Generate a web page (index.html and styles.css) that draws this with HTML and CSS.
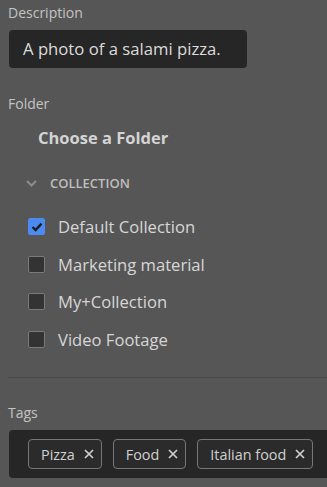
FILE: index.html
```html
<!DOCTYPE html>
<html>
<head>
<meta charset="utf-8">
<link rel="stylesheet" href="styles.css">
</head>
<body>
<div class="panel">
  <div class="field">
    <div class="label">Description</div>
    <div class="input">A photo of a salami pizza.</div>
  </div>
  <div class="field folder">
    <div class="label">Folder</div>
    <div class="choose">Choose a Folder</div>
    <div class="group-head">
      <svg class="chev" width="11" height="7" viewBox="0 0 11 7"><path d="M1 1 L5.5 5.5 L10 1" fill="none" stroke="#8c8c8c" stroke-width="2"/></svg>
      <span>COLLECTION</span>
    </div>
    <ul class="list">
      <li class="item"><span class="cb checked"><svg width="12" height="10" viewBox="0 0 12 10"><path d="M1.5 5 L4.6 8 L10.5 1.6" fill="none" stroke="#1c1c1c" stroke-width="2.4"/></svg></span>Default Collection</li>
      <li class="item"><span class="cb"></span>Marketing material</li>
      <li class="item"><span class="cb"></span>My+Collection</li>
      <li class="item"><span class="cb"></span>Video Footage</li>
    </ul>
  </div>
  <div class="divider"></div>
  <div class="field tags-field">
    <div class="label">Tags</div>
    <div class="tags">
      <span class="tag">Pizza<svg class="x" width="10" height="10" viewBox="0 0 10 10"><path d="M1 1 L9 9 M9 1 L1 9" stroke="#cfcfcf" stroke-width="1.7"/></svg></span>
      <span class="tag">Food<svg class="x" width="10" height="10" viewBox="0 0 10 10"><path d="M1 1 L9 9 M9 1 L1 9" stroke="#cfcfcf" stroke-width="1.7"/></svg></span>
      <span class="tag">Italian food<svg class="x" width="10" height="10" viewBox="0 0 10 10"><path d="M1 1 L9 9 M9 1 L1 9" stroke="#cfcfcf" stroke-width="1.7"/></svg></span>
    </div>
  </div>
</div>
</body>
</html>
```
FILE: styles.css
```css
* { box-sizing: border-box; }
html, body { margin: 0; padding: 0; }
body {
  background: #565656;
  font-family: "Open Sans", "Noto Sans", sans-serif;
  color: #d2d2d2;
  width: 327px;
  height: 487px;
  overflow: hidden;
}
.panel { padding: 4px 0 0 8px; }
.label {
  font-size: 14px;
  color: #c4c4c4;
  line-height: 18px;
}
.input {
  margin-top: 8px;
  margin-left: 1px;
  width: 238px;
  height: 38px;
  background: #262626;
  border-radius: 4px;
  padding: 0 14px;
  font-size: 16.7px;
  line-height: 38px;
  color: #dcdcdc;
}
.folder { margin-top: 27px; }
.choose {
  margin: 14px 0 0 30px;
  font-size: 16.5px;
  font-weight: 700;
  color: #d4d4d4;
  line-height: 22px;
}
.group-head {
  display: flex;
  align-items: center;
  margin: 24px 0 0 18px;
  height: 20px;
  font-size: 13px;
  font-weight: 600;
  color: #bfbfbf;
}
.chev { margin-right: 13px; }
.list { list-style: none; margin: 15px 0 0 0; padding: 0; }
.item {
  display: flex;
  align-items: center;
  height: 37.6px;
  padding-left: 20px;
  font-size: 16.6px;
  color: #d6d6d6;
}
.cb {
  width: 17px;
  height: 17px;
  border: 1.5px solid #7a7a7a;
  border-radius: 2px;
  background: #333;
  margin-right: 13px;
  display: flex;
  align-items: center;
  justify-content: center;
}
.cb.checked { background: #4b8af0; border-color: #4b8af0; }
.divider {
  height: 1px;
  background: #484848;
  margin-top: 19px;
}
.tags-field { margin-top: 26px; }
.tags {
  margin-top: 8px;
  margin-left: 1px;
  height: 48px;
  width: 330px;
  background: #262626;
  border-radius: 4px 0 0 4px;
  display: flex;
  align-items: center;
  gap: 11px;
  padding-left: 19px;
}
.tag {
  display: flex;
  align-items: center;
  height: 30px;
  padding: 0 7px 0 12px;
  border: 1px solid #777;
  border-radius: 4px;
  background: #2b2b2b;
  font-size: 14.4px;
  color: #d0d0d0;
}
.x { margin-left: 9px; }
```
